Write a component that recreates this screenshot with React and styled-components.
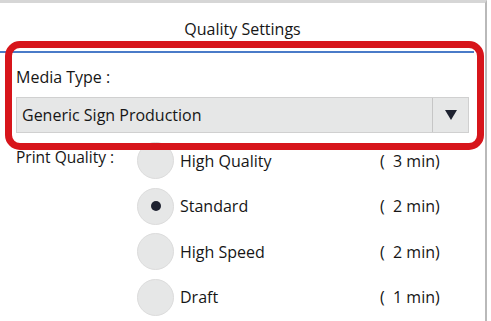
import React from 'react'
import styled, { createGlobalStyle } from 'styled-components'

const GlobalStyle = createGlobalStyle`
  html, body {
    margin: 0;
    padding: 0;
    background: #ffffff;
  }
  body {
    font-family: "Open Sans", "Noto Sans", "Liberation Sans", sans-serif;
    color: #161616;
  }
`

const Frame = styled.div`
  position: relative;
  box-sizing: border-box;
  width: 487px;
  height: 321px;
  border-top: 3px solid #d6d6d6;
  border-right: 2px solid #b9b9b9;
  overflow: hidden;
`

const Title = styled.div`
  font-size: 16px;
  line-height: 20px;
  padding-top: 16px;
  height: 32px;
  text-align: center;
`

const Rule = styled.div`
  width: 474px;
  height: 2px;
  background: #4a7bc8;
`

const Section = styled.div`
  padding: 0 16px;
`

const FieldLabel = styled.div`
  font-size: 16px;
  line-height: 20px;
  margin-top: 14px;
`

const Select = styled.div`
  display: flex;
  box-sizing: border-box;
  width: 453px;
  height: 36px;
  margin-top: 10px;
  background: #e6e7e7;
  border: 1px solid #d0d0d0;
`

const SelectValue = styled.div`
  flex: 1;
  display: flex;
  align-items: center;
  padding-left: 5px;
  font-size: 16px;
`

const ArrowCell = styled.div`
  width: 35px;
  display: flex;
  align-items: center;
  justify-content: center;
  border-left: 1px solid #c6c6c6;
`

const QualityGrid = styled.div`
  display: grid;
  grid-template-columns: 121px 1fr;
  margin-top: 5px;
`

const QualityLabel = styled.div`
  font-size: 15.5px;
  line-height: 20px;
  padding-top: 9px;
`

const Options = styled.div`
  display: flex;
  flex-direction: column;
`

const Option = styled.div`
  display: grid;
  grid-template-columns: 43px 200px auto;
  align-items: center;
  height: 45.5px;
`

const Radio = styled.span`
  box-sizing: border-box;
  width: 37px;
  height: 37px;
  border-radius: 50%;
  background: #e6e7e7;
  border: 1px solid #dcdcdc;
  display: flex;
  align-items: center;
  justify-content: center;

  &::after {
    content: '';
    display: ${({ $checked }) => ($checked ? 'block' : 'none')};
    width: 10px;
    height: 10px;
    border-radius: 50%;
    background: #1e2230;
  }
`

const OptionText = styled.span`
  font-size: 16px;
`

const Time = styled.span`
  font-size: 16px;
  white-space: pre;
`

const Highlight = styled.div`
  position: absolute;
  box-sizing: border-box;
  left: 5px;
  top: 38px;
  width: 479px;
  height: 109px;
  border: 7px solid #d7151b;
  border-radius: 15px;
  pointer-events: none;
`

const options = [
  { label: 'High Quality', time: '(  3 min)' },
  { label: 'Standard', time: '(  2 min)', checked: true },
  { label: 'High Speed', time: '(  2 min)' },
  { label: 'Draft', time: '(  1 min)' },
]

const App = () => {
  return (
    <Frame>
      <GlobalStyle />
      <Title>Quality Settings</Title>
      <Rule />
      <Section>
        <FieldLabel>Media Type :</FieldLabel>
        <Select>
          <SelectValue>Generic Sign Production</SelectValue>
          <ArrowCell>
            <svg width="12" height="10" viewBox="0 0 12 10">
              <path d="M0 0 H12 L6 10 Z" fill="#1e2230" />
            </svg>
          </ArrowCell>
        </Select>
        <QualityGrid>
          <QualityLabel>Print Quality :</QualityLabel>
          <Options>
            {options.map((o) => (
              <Option key={o.label}>
                <Radio $checked={o.checked} />
                <OptionText>{o.label}</OptionText>
                <Time>{o.time}</Time>
              </Option>
            ))}
          </Options>
        </QualityGrid>
      </Section>
      <Highlight />
    </Frame>
  )
}

export default App
